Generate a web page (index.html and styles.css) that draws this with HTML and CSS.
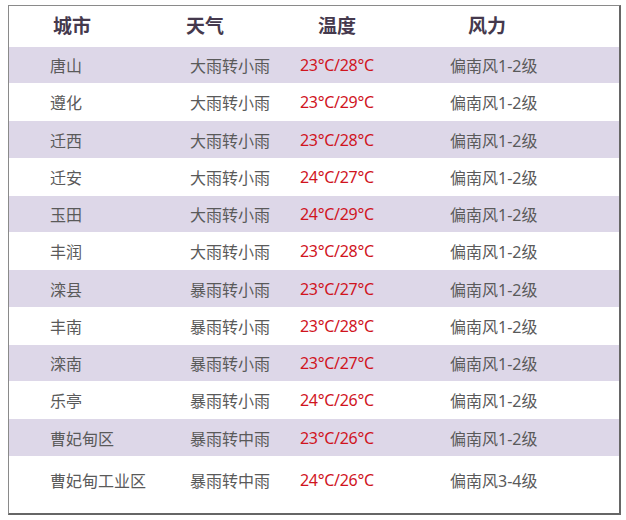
FILE: index.html
```html
<!DOCTYPE html>
<html lang="zh">
<head>
<meta charset="utf-8">
<link rel="stylesheet" href="styles.css">
</head>
<body>
<div class="frame">
  <div class="head">
    <div class="h h1">城市</div>
    <div class="h h2">天气</div>
    <div class="h h3">温度</div>
    <div class="h h4">风力</div>
  </div>
  <div class="rows">
    <div class="row"><span class="c1">唐山</span><span class="c2">大雨转小雨</span><span class="c3">23°C/28°C</span><span class="c4">偏南风1-2级</span></div>
    <div class="row"><span class="c1">遵化</span><span class="c2">大雨转小雨</span><span class="c3">23°C/29°C</span><span class="c4">偏南风1-2级</span></div>
    <div class="row"><span class="c1">迁西</span><span class="c2">大雨转小雨</span><span class="c3">23°C/28°C</span><span class="c4">偏南风1-2级</span></div>
    <div class="row"><span class="c1">迁安</span><span class="c2">大雨转小雨</span><span class="c3">24°C/27°C</span><span class="c4">偏南风1-2级</span></div>
    <div class="row"><span class="c1">玉田</span><span class="c2">大雨转小雨</span><span class="c3">24°C/29°C</span><span class="c4">偏南风1-2级</span></div>
    <div class="row"><span class="c1">丰润</span><span class="c2">大雨转小雨</span><span class="c3">23°C/28°C</span><span class="c4">偏南风1-2级</span></div>
    <div class="row"><span class="c1">滦县</span><span class="c2">暴雨转小雨</span><span class="c3">23°C/27°C</span><span class="c4">偏南风1-2级</span></div>
    <div class="row"><span class="c1">丰南</span><span class="c2">暴雨转小雨</span><span class="c3">23°C/28°C</span><span class="c4">偏南风1-2级</span></div>
    <div class="row"><span class="c1">滦南</span><span class="c2">暴雨转小雨</span><span class="c3">23°C/27°C</span><span class="c4">偏南风1-2级</span></div>
    <div class="row"><span class="c1">乐亭</span><span class="c2">暴雨转小雨</span><span class="c3">24°C/26°C</span><span class="c4">偏南风1-2级</span></div>
    <div class="row"><span class="c1">曹妃甸区</span><span class="c2">暴雨转中雨</span><span class="c3">23°C/26°C</span><span class="c4">偏南风1-2级</span></div>
    <div class="row last"><span class="c1">曹妃甸工业区</span><span class="c2">暴雨转中雨</span><span class="c3">24°C/26°C</span><span class="c4">偏南风3-4级</span></div>
  </div>
</div>
</body>
</html>
```
FILE: styles.css
```css
html, body {
  margin: 0;
  padding: 0;
  background: #ffffff;
}
body {
  font-family: "Noto Sans", "Noto Sans CJK SC", sans-serif;
}
.frame {
  margin: 5px 0 0 8px;
  width: 613px;
  height: 510px;
  box-sizing: border-box;
  border-top: 1px solid #8a8a8a;
  border-left: 1px solid #8a8a8a;
  border-right: 2px solid #666666;
  border-bottom: 2px solid #666666;
  display: flex;
  flex-direction: column;
}
.head {
  height: 41px;
  display: grid;
  grid-template-columns: 44px 133px 132px 150px 1fr;
  align-items: center;
  color: #45394d;
  font-size: 19px;
  font-weight: 700;
}
.h { padding-bottom: 3px; }
.h1 { grid-column: 2; }
.h2 { grid-column: 3; }
.h3 { grid-column: 4; }
.h4 { grid-column: 5; }
.rows {
  flex: 1;
  display: flex;
  flex-direction: column;
}
.row {
  display: grid;
  grid-template-columns: 41px 140px 110px 150px 1fr;
  align-items: center;
  height: 38.2px;
  font-size: 16px;
  color: #5a5a5a;
}
.row:nth-child(odd) {
  background: #ddd7e8;
  height: 36.3px;
}
.row.last {
  flex: 1;
  padding-bottom: 8px;
}
.c1 { grid-column: 2; }
.c2 { grid-column: 3; }
.c3 { grid-column: 4; color: #d0141e; letter-spacing: -0.3px; }
.c4 { grid-column: 5; }
```
